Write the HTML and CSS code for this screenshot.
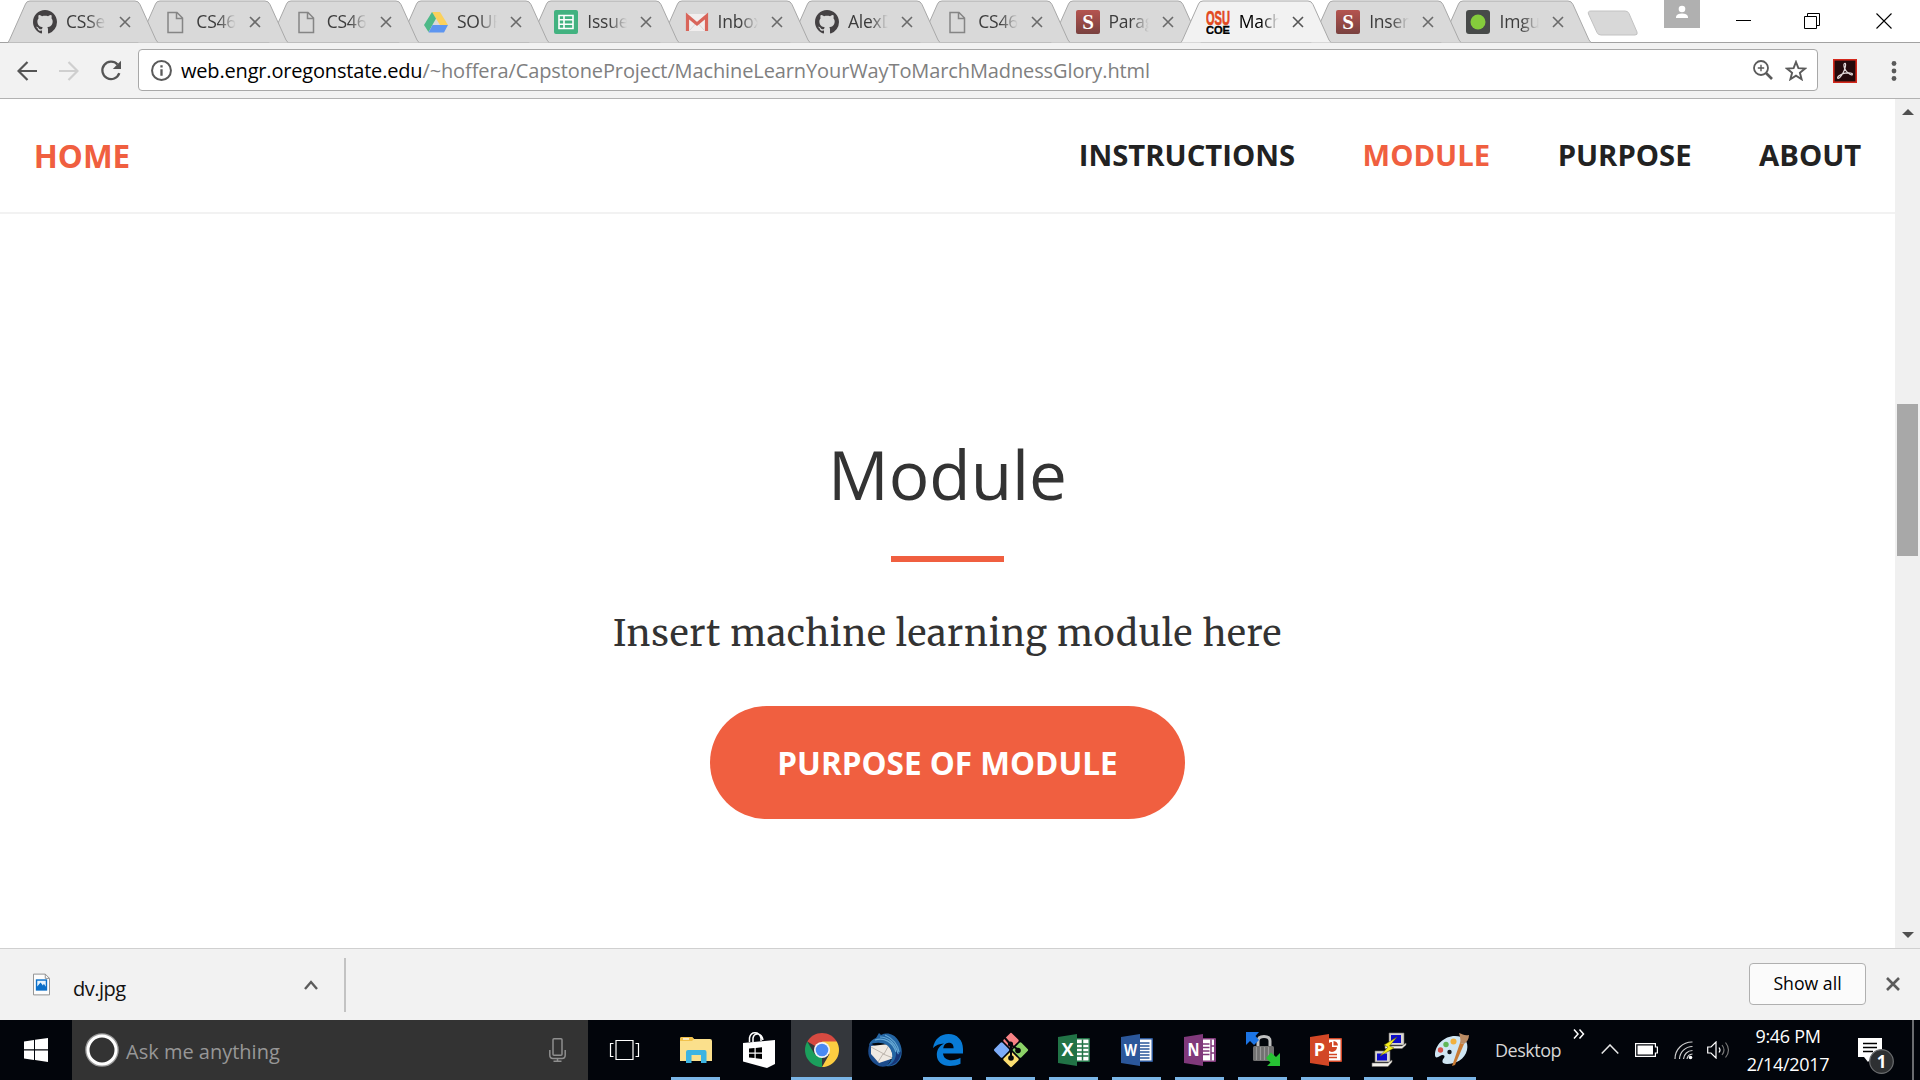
FILE: index.html
```html
<!DOCTYPE html>
<html lang="en">
<head>
<meta charset="utf-8">
<title>Machine Learn Your Way To March Madness Glory</title>
<link rel="stylesheet" href="styles.css">
</head>
<body>
<svg class="defs" width="0" height="0" aria-hidden="true">
  <symbol id="tab" viewBox="0 0 150 43" preserveAspectRatio="none">
    <path d="M0 42.500L1.500 40L17.500 4Q18.500 1 22 1H127Q130.500 1 132 4.500L148 40L150 42.500" stroke-width="1"/>
  </symbol>
  <symbol id="github" viewBox="0 0 16 16"><path fill="#444143" d="M8 0C3.580 0 0 3.580 0 8c0 3.540 2.290 6.530 5.470 7.590.4.070.55-.17.55-.38 0-.19-.01-.82-.01-1.490-2.010.37-2.530-.49-2.690-.94-.09-.23-.48-.94-.82-1.130-.28-.15-.68-.52-.01-.53.63-.01 1.080.58 1.230.82.72 1.210 1.870.87 2.330.66.07-.52.28-.87.51-1.070-1.780-.2-3.640-.89-3.640-3.950 0-.87.31-1.590.82-2.150-.08-.2-.36-1.020.08-2.120 0 0 .67-.21 2.200.82.64-.18 1.320-.27 2-.27s1.360.09 2 .27c1.530-1.040 2.200-.82 2.200-.82.44 1.100.16 1.920.08 2.120.51.56.82 1.270.82 2.150 0 3.070-1.870 3.750-3.650 3.950.29.25.54.73.54 1.480 0 1.070-.01 1.930-.01 2.200 0 .21.15.46.55.38A8.010 8.010 0 0 0 16 8c0-4.420-3.580-8-8-8z"/></symbol>
  <symbol id="page" viewBox="0 0 24 24"><path d="M5 2.500H14L19.500 8V22.500H5ZM13.500 2.500V8.500H19.500" fill="none" stroke="#858585" stroke-width="1.500"/></symbol>
  <symbol id="s" viewBox="0 0 24 24"><defs><linearGradient id="sg" x2="0" y2="1"><stop stop-color="#b5544f"/><stop offset="1" stop-color="#79413f"/></linearGradient></defs><rect width="24" height="24" rx="2" fill="url(#sg)"/><text x="12" y="19" text-anchor="middle" class="s-letter">S</text></symbol>
  <symbol id="x" viewBox="0 0 12 12"><path d="M1 1L11 11M11 1L1 11" fill="none" stroke="currentColor" stroke-width="1.600"/></symbol>
</svg>

<header class="tabstrip">
  <div class="tabs">
    <div class="tab"><svg class="shape"><use href="#tab"/></svg><svg class="fav"><use href="#github"/></svg><span>CSSe</span><svg class="close"><use href="#x"/></svg></div>
    <div class="tab"><svg class="shape"><use href="#tab"/></svg><svg class="fav"><use href="#page"/></svg><span>CS46</span><svg class="close"><use href="#x"/></svg></div>
    <div class="tab"><svg class="shape"><use href="#tab"/></svg><svg class="fav"><use href="#page"/></svg><span>CS46</span><svg class="close"><use href="#x"/></svg></div>
    <div class="tab"><svg class="shape"><use href="#tab"/></svg><svg class="fav" viewBox="0 0 24 24"><path d="M8 2H16L24 15H16Z" fill="#fbd15c"/><path d="M8 2L12 8.500L4.500 22L0 15Z" fill="#4db987"/><path d="M8.500 15H24L20 22.500H4.500Z" fill="#5d95f0"/></svg><span>SOURCE</span><svg class="close"><use href="#x"/></svg></div>
    <div class="tab"><svg class="shape"><use href="#tab"/></svg><svg class="fav" viewBox="0 0 24 24"><rect width="24" height="24" rx="2" fill="#42b280"/><path d="M5 5.500H19V18.500H5ZM5 9.800H19M5 14.200H19M10 5.500V18.500" fill="none" stroke="#fff" stroke-width="1.600"/></svg><span>Issues</span><svg class="close"><use href="#x"/></svg></div>
    <div class="tab"><svg class="shape"><use href="#tab"/></svg><svg class="fav" viewBox="0 0 24 24"><path d="M1 4H23V21H1Z" fill="#f1eeee"/><path d="M5 20L12 12L19 20" fill="none" stroke="#d8d6d6"/><path d="M2.500 21V6L12 14L21.500 6V21" fill="none" stroke="#d9655a" stroke-width="3.200"/></svg><span>Inbox</span><svg class="close"><use href="#x"/></svg></div>
    <div class="tab"><svg class="shape"><use href="#tab"/></svg><svg class="fav"><use href="#github"/></svg><span>AlexD</span><svg class="close"><use href="#x"/></svg></div>
    <div class="tab"><svg class="shape"><use href="#tab"/></svg><svg class="fav"><use href="#page"/></svg><span>CS46</span><svg class="close"><use href="#x"/></svg></div>
    <div class="tab"><svg class="shape"><use href="#tab"/></svg><svg class="fav"><use href="#s"/></svg><span>Parag</span><svg class="close"><use href="#x"/></svg></div>
    <div class="tab active"><svg class="shape"><use href="#tab"/></svg><svg class="fav" viewBox="0 0 24 24"><text x="0" y="14.500" textLength="24" lengthAdjust="spacingAndGlyphs" class="osu">OSU</text><text x="0" y="24" textLength="24" lengthAdjust="spacingAndGlyphs" class="coe">COE</text></svg><span>Mach</span><svg class="close"><use href="#x"/></svg></div>
    <div class="tab"><svg class="shape"><use href="#tab"/></svg><svg class="fav"><use href="#s"/></svg><span>Insert</span><svg class="close"><use href="#x"/></svg></div>
    <div class="tab"><svg class="shape"><use href="#tab"/></svg><svg class="fav" viewBox="0 0 24 24"><rect width="24" height="24" rx="3" fill="#474a49"/><circle cx="12" cy="12" r="7.500" fill="#85cc3c"/></svg><span>Imgur</span><svg class="close"><use href="#x"/></svg></div>
  </div>
  <svg class="newtab" viewBox="0 0 52 26"><path d="M4 1H38Q41 1 42 3.500L50 22Q51 25 48 25H14Q11 25 10 22.500L1.500 4Q0.500 1 4 1Z" fill="#d8d8d8" stroke="#c2c2c2"/></svg>
  <div class="winctl">
    <svg class="avatar" viewBox="0 0 36 28"><path fill="#b0b0b0" d="M0 0H36V28H0Z"/><circle cx="18" cy="9" r="3.300" fill="#fff"/><path d="M12 18V16.500Q13 13.500 18 13.500T24 16.500V18Z" fill="#fff"/></svg>
    <svg class="min" viewBox="0 0 15 16"><path d="M0 8.500H15" stroke="#000"/></svg>
    <svg class="max" viewBox="0 0 16 16"><path d="M.5 3.500H12.500V15.500H.5ZM3.500 3.500V.5H15.500V12.500H12.500" fill="none" stroke="#000"/></svg>
    <svg class="quit" viewBox="0 0 16 16"><path d="M.5 .5L15.500 15.500M15.500 .5L.5 15.500" stroke="#000" stroke-width="1.100"/></svg>
  </div>
</header>

<div class="toolbar">
  <svg class="back" viewBox="0 0 20 20"><path d="M20 10H2M10.500 1L1.500 10L10.500 19" fill="none" stroke="#555" stroke-width="2.200"/></svg>
  <svg class="fwd" viewBox="0 0 20 20"><path d="M0 10H18M9.500 1L18.500 10L9.500 19" fill="none" stroke="#cfcfcf" stroke-width="2.200"/></svg>
  <svg class="reload" viewBox="0 0 22 22"><path d="M17.500 4.500A8.700 8.700 0 1 0 19.300 13.200" fill="none" stroke="#555" stroke-width="2.300"/><path d="M21 .8V9H12.800Z" fill="#555"/></svg>
  <div class="omnibox">
    <svg class="info" viewBox="0 0 20 20"><circle cx="10" cy="10" r="9" fill="none" stroke="#5a5a5a" stroke-width="1.900"/><path d="M10 8.800V15M10 5V7.200" stroke="#5a5a5a" stroke-width="2.200"/></svg>
    <div class="url"><b>web.engr.oregonstate.edu</b>/~hoffera/CapstoneProject/MachineLearnYourWayToMarchMadnessGlory.html</div>
    <svg class="lens" viewBox="0 0 20 20"><circle cx="8" cy="8" r="7" fill="none" stroke="#5a5a5a" stroke-width="1.800"/><path d="M8 4.800V11.200M4.800 8H11.200" stroke="#5a5a5a" stroke-width="1.400"/><path d="M13 13L19 19" stroke="#5a5a5a" stroke-width="2.600"/></svg>
    <svg class="star" viewBox="0 0 22 21"><path d="M11 2L13.400 8.200L20 8.600L14.900 12.800L16.600 19.200L11 15.600L5.400 19.200L7.100 12.800L2 8.600L8.600 8.200Z" fill="none" stroke="#5a5a5a" stroke-width="1.900"/></svg>
  </div>
  <svg class="adobe" viewBox="0 0 24 24"><rect x=".8" y=".8" width="22.400" height="22.400" fill="#240a0c" stroke="#d4281c" stroke-width="1.600"/><path d="M11.500 4.500C13.500 3.500 12.500 9 10.500 13C8.500 17 6 20 4.800 19.300C3.500 18 8 15 12 14.200C16 13.400 20 14 19.300 15.600C18.500 17 13 13 11.600 9.500C10.800 7 10.500 5 11.500 4.500Z" fill="none" stroke="#e5dcdc" stroke-width="1.200"/></svg>
  <svg class="dots" viewBox="0 0 6 20"><g fill="#5a5a5a"><circle cx="3" cy="2.500" r="2.400"/><circle cx="3" cy="10" r="2.400"/><circle cx="3" cy="17.500" r="2.400"/></g></svg>
</div>

<div class="viewport">
  <main class="page">
    <nav class="nav">
      <a class="brand">HOME</a>
      <div class="links"><a>INSTRUCTIONS</a><a class="on">MODULE</a><a>PURPOSE</a><a>ABOUT</a></div>
    </nav>
    <section class="hero">
      <h2>Module</h2>
      <hr>
      <p>Insert machine learning module here</p>
      <a class="btn">PURPOSE OF MODULE</a>
    </section>
  </main>
  <div class="scrollbar">
    <svg viewBox="0 0 12 6"><path d="M0 6L6 0L12 6Z" fill="#505050"/></svg>
    <div class="thumb"></div>
    <svg viewBox="0 0 12 6"><path d="M0 0L6 6L12 0Z" fill="#505050"/></svg>
  </div>
</div>

<div class="shelf">
  <div class="item">
    <svg class="file" viewBox="0 0 18 23"><path d="M.5 .5H13L17.500 5V22.500H.5Z" fill="#fdfdfd" stroke="#8d8d8d"/><path d="M13 .5V5H17.500" fill="none" stroke="#8d8d8d"/><path d="M3 6H15V18H3Z" fill="#0a6fc9"/><path d="M4.500 7.500H13.500V14L11.500 10.800L10.500 12.500L8 9.500L4.500 13.500Z" fill="#e8f4fd"/></svg>
    <span>dv.jpg</span>
    <svg class="up" viewBox="0 0 14 10"><path d="M1 9L7 2L13 9" fill="none" stroke="#5c5c5c" stroke-width="2.400"/></svg>
  </div>
  <div class="showall">Show all</div>
  <svg class="dismiss" viewBox="0 0 14 14"><path d="M1 1L13 13M13 1L1 13" stroke="#5c5c5c" stroke-width="2.600"/></svg>
</div>

<footer class="taskbar">
  <div class="start"><svg viewBox="0 0 24 24"><path d="M0 3.400L10 2V11.300H0ZM11 1.800L24 0V11.300H11ZM0 12.500H10V21.900L0 20.600ZM11 12.500H24V24L11 22Z" fill="#fff"/></svg></div>
  <div class="search">
    <svg class="ring" viewBox="0 0 34 34"><circle cx="17" cy="17" r="15.800" fill="none" stroke="#9a9a9a" stroke-width="2"/><circle cx="17" cy="17" r="14" fill="none" stroke="#fff" stroke-width="3"/></svg>
    <span>Ask me anything</span>
    <svg class="mic" viewBox="0 0 17 24"><g fill="none" stroke="#8f8f8f" stroke-width="1.500"><rect x="4" y=".8" width="9" height="16.400" rx="1"/><path d="M.8 12V17Q.8 20.500 4 20.500H13Q16.200 20.500 16.200 17V12M8.500 20.500V23M4.500 23.200H12.500"/></g></svg>
  </div>
  <div class="apps">
    <div class="app plain"><svg viewBox="0 0 36 36"><path d="M9 8.500H26V27.500H9ZM6.500 11.500H3.500V24.500H6.500M28.500 11.500H31.500V24.500H28.500" fill="none" stroke="#fff" stroke-width="1.200"/></svg></div>
    <div class="app"><svg viewBox="0 0 36 36"><path d="M2 7Q2 5 4 5H14L16 7H32Q34 7 34 9V29H2Z" fill="#fbe08c"/><path d="M2 7Q2 5 4 5H14L16 7L14 9H2Z" fill="#f1c14b"/><path d="M5 6.300H11V7.600H5Z" fill="#fff"/><path d="M8 31V20Q8 18 10 18H26.500Q28.500 18 28.500 20V31H23V23H13.500V31Z" fill="#3db4e2"/></svg></div>
    <div class="app plain"><svg viewBox="0 0 36 36"><path d="M2 11L34 8V32L26 36L2 29.500Z" fill="#fff"/><path d="M8.500 10V6Q9.500 .8 14 .8T20 6V9M12 10V6Q13 1.500 17 2T22 8" fill="none" stroke="#fff" stroke-width="1.500"/><path d="M8 16.500L13.500 16V20.500H8ZM14.700 15.900L21 15.200V20.500H14.700ZM8 21.700H13.500V26L8 25.500ZM14.700 21.700H21V27L14.700 26.200Z" fill="#000"/></svg></div>
    <div class="app active"><svg viewBox="0 0 36 36"><path d="M18 18L3.280 9.500A17 17 0 0 1 32.720 9.500Z" fill="#d64a41"/><path d="M18 18L18 35A17 17 0 0 1 3.280 9.500L10.640 22.250Z" fill="#1b9f5c"/><path d="M18 9.500H32.720A17 17 0 0 1 18 35L25.360 22.250Z" fill="#fccd41"/><circle cx="18" cy="18" r="8" fill="#f4f4f4"/><circle cx="18" cy="18" r="6.300" fill="#4a8af4"/></svg></div>
    <div class="app plain"><svg viewBox="0 0 36 36"><path d="M3 11C1 16 0 23 4 28C8 33 13 36 20 34L24 28L8 14Z" fill="#1c4c8c"/><path d="M4 14L22 12L27 26L12 31L4 22Z" fill="#efe9e2"/><path d="M4 15L17 22L22 13M11 30L16 22L26 26" fill="none" stroke="#bdb5ad"/><path d="M2 13C3 9 6 7 9 6L12 1L14 3C20 0 27 2 31 8C36 15 36 25 31 30C28 34 23 35 19 34C27 29 27 20 21 14C16 10 8 10 2 13Z" fill="#2465a3"/><path d="M8 8C17 5 26 10 29 20M13 5C22 5 29 12 31 22M18 3C26 6 31 13 32 20" fill="none" stroke="#67a9d5" stroke-width="1.200"/><path d="M29 18C30 25 27 31 21 34C29 33 34 27 34 19L31 23Z" fill="#173678"/></svg></div>
    <div class="app"><svg viewBox="0 0 36 36"><path d="M3 16C4.500 7 10.500 2 18.500 2C27 2 33 8 33 17V21.500H13C13.500 26 17 28.300 21.500 28.300C25 28.300 28 27.300 30.500 25.800V31.800C27.500 33.400 23.500 34 20 34C12 34 6.800 29.500 6.800 22.700C6.800 17.500 9.500 13.500 14 11.400C9.500 11.700 5.500 13 3 16ZM13.200 16.200H23.600C23.600 12.500 21.800 10.800 18.600 10.800C15.500 10.800 13.800 13 13.200 16.200Z" fill="#087bd6"/></svg></div>
    <div class="app"><svg viewBox="0 0 36 36"><g transform="rotate(45 18 18)"><rect x="5.500" y="5.500" width="11.700" height="11.700" rx="1.500" fill="#f78285"/><rect x="18.800" y="5.500" width="11.700" height="11.700" rx="1.500" fill="#8cd268"/><rect x="5.500" y="18.800" width="11.700" height="11.700" rx="1.500" fill="#7dacf8"/><rect x="18.800" y="18.800" width="11.700" height="11.700" rx="1.500" fill="#fbde71"/></g><path d="M11 5L18 13V26M18 13L26 18" stroke="#05070c" stroke-width="2" fill="none"/><g fill="#05070c"><circle cx="17.500" cy="12" r="2.600"/><circle cx="18" cy="26" r="2.800"/><circle cx="25" cy="18.500" r="2.800"/></g></svg></div>
    <div class="app"><svg viewBox="0 0 36 36"><rect x="20" y="6" width="14" height="24" rx="1" fill="#217346"/><path d="M20 7.500H32.500V28.500H20Z" fill="#fff"/><path d="M20 12H32.500M20 16H32.500M20 20H32.500M20 24H32.500M26.500 7.500V28.500" stroke="#217346" stroke-width="1.500"/><path d="M2 5L21 2V34L2 31Z" fill="#217346"/><text x="11.500" y="24" text-anchor="middle" class="office">X</text></svg></div>
    <div class="app"><svg viewBox="0 0 36 36"><rect x="20" y="6" width="14" height="24" rx="1" fill="#2b579a"/><path d="M20 7.500H32.500V28.500H20Z" fill="#fff"/><path d="M20 11H30.500M20 14H30.500M20 17H30.500M20 20H30.500M20 23H30.500M20 26H30.500" stroke="#2b579a" stroke-width="1.300"/><path d="M2 5L21 2V34L2 31Z" fill="#2b579a"/><text x="11.500" y="23.500" textLength="13" lengthAdjust="spacingAndGlyphs" text-anchor="middle" class="office w">W</text></svg></div>
    <div class="app"><svg viewBox="0 0 36 36"><rect x="20" y="6" width="14" height="24" rx="1" fill="#80397b"/><path d="M20 7.500H32V28.500H20Z" fill="#fff"/><path d="M20 12H27.500M20 15.500H27.500M20 19H27.500M20 22.500H27.500M29 7.500V28.500M28.500 14H33M28.500 21H33" stroke="#80397b" stroke-width="1.500"/><path d="M2 5L21 2V34L2 31Z" fill="#80397b"/><text x="11.500" y="24" textLength="12" lengthAdjust="spacingAndGlyphs" text-anchor="middle" class="office">N</text></svg></div>
    <div class="app"><svg viewBox="0 0 36 36"><path d="M13 14V9Q13 4.500 19 4.500T25 9V14" fill="none" stroke="#bfc0c0" stroke-width="3"/><rect x="8" y="14" width="21" height="15" rx="1.500" fill="#717171"/><path d="M11.500 15V28M15.500 15V28M19.500 15V28M23.500 15V28" stroke="#999" stroke-width="1.200"/><path d="M1 0H14L10.500 4L14 8L9 13L5 9L1 13Z" fill="#1c75e5"/><path d="M35 34H22L25.500 30.500L21 26L26 20.500L31 25L35 21Z" fill="#27c334"/></svg></div>
    <div class="app"><svg viewBox="0 0 36 36"><rect x="20" y="6" width="14" height="24" rx="1" fill="#d24726"/><path d="M20 7.500H32.500V28.500H20Z" fill="#fff"/><path d="M20 22.500H29M20 25.500H29" stroke="#d24726" stroke-width="1.400"/><path d="M24 10A5 5 0 1 0 29 15H24Z" fill="#d24726"/><path d="M25.500 9A5 5 0 0 1 30 13.500H25.500Z" fill="#d24726"/><path d="M2 5L21 2V34L2 31Z" fill="#d24726"/><text x="11.500" y="24" text-anchor="middle" class="office">P</text></svg></div>
    <div class="app"><svg viewBox="0 0 36 36"><g stroke="#77746f" stroke-width=".6"><path d="M18 1H33V13H18Z" fill="#d9d6cf"/><path d="M14 14H31L35 11V13L31 16.500H14Z" fill="#f3f1eb"/><path d="M4 19H19V30H4Z" fill="#d9d6cf"/><path d="M1 31H17L21 28V30L17 34.500H1Z" fill="#f3f1eb"/></g><path d="M20 3H30V11H20ZM6 21.500H16V28.500H6Z" fill="#0d0cc9"/><path d="M26 5L13 13L17 15L9 24L23 16L18.500 14Z" fill="#f5ee1e" stroke="#5c5800" stroke-width=".5"/></svg></div>
    <div class="app"><svg viewBox="0 0 36 36"><path d="M1 23C1 13 10 4 21 4C30 4 35 10 33 18C31 27 22 32 13 32C7 32 8 28 10 26C12 23 8 22 6 24C3 26 1 26 1 23Z" fill="#cfe6f3"/><circle cx="6.500" cy="18" r="2.700" fill="#d8534b"/><circle cx="12" cy="12.500" r="2.700" fill="#5fb657"/><circle cx="19.500" cy="9.500" r="3" fill="#f2b13c"/><circle cx="15.500" cy="20" r="2.200" fill="#10151c"/><path d="M26 11L30 12L21 33L18 34Z" fill="#c77a33"/><path d="M25 1C29 2 30 4 35 3C35 7 33 10 30 12L26 11C27 8 26 5 25 1Z" fill="#bb8c64"/></svg></div>
  </div>
  <div class="tray">
    <span class="desk">Desktop</span>
    <svg class="more" viewBox="0 0 12 10"><path d="M1 .5L5 5L1 9.500M6.500 .5L10.500 5L6.500 9.500" fill="none" stroke="#fff" stroke-width="1.500"/></svg>
    <svg class="caret" viewBox="0 0 18 10"><path d="M.7 9.500L9 1L17.300 9.500" fill="none" stroke="#e8e8e8" stroke-width="1.500"/></svg>
    <svg class="batt" viewBox="0 0 23 14"><path d="M.6 .6H20.400V4H22.400V10H20.400V13.400H.6Z" fill="none" stroke="#fff" stroke-width="1.200"/><path d="M2.500 2.500H18V11.500H2.500Z" fill="#fff"/></svg>
    <svg class="wifi" viewBox="0 0 19 19"><g fill="none" stroke="#d0d0d0" stroke-width="1.200"><path d="M1 18A17 17 0 0 1 18.500 1M5.500 18A13 13 0 0 1 18.500 5.500M9.500 18A9 9 0 0 1 18.500 9.500M13 18A6 6 0 0 1 18.500 13"/></g><circle cx="16.500" cy="16.500" r="1.800" fill="#fff"/></svg>
    <svg class="vol" viewBox="0 0 23 18"><path d="M.7 6H4L9 1V17L4 12H.7Z" fill="none" stroke="#fff" stroke-width="1.200"/><path d="M12 6.500Q14 9 12 11.500" fill="none" stroke="#fff" stroke-width="1.200"/><path d="M15 4Q19 9 15 14M18.500 1.500Q24.500 9 18.500 16.500" fill="none" stroke="#777" stroke-width="1.200"/></svg>
    <div class="clock"><span>9:46 PM</span><span>2/14/2017</span></div>
    <svg class="note" viewBox="0 0 36 37"><path d="M0 1H24V20H14L10 25L6 20H0Z" fill="#fff"/><path d="M5 6.500H19M5 10.500H19M5 14.500H15" stroke="#000" stroke-width="1.300"/><circle cx="23.500" cy="24.500" r="11.800" fill="#2e3032" stroke="#6c6e70" stroke-width="1.200"/><text x="23.500" y="31" text-anchor="middle" class="badge">1</text></svg>
    <div class="peek"></div>
  </div>
</footer>
</body>
</html>
```
FILE: styles.css
```css
* { box-sizing: border-box; }
body { margin: 0; width: 1920px; height: 1080px; overflow: hidden; background: #fff; font-family: "Open Sans", "Noto Sans", sans-serif; display: flex; flex-direction: column; }
svg { display: block; flex: none; }
.defs { position: absolute; }

/* tab strip */
.tabstrip { height: 43px; flex: none; display: flex; align-items: flex-start; border-bottom: 1px solid #a2a2a2; padding-left: 8px; }
.tabs { display: flex; height: 43px; isolation: isolate; }
.tab { position: relative; width: 150px; height: 43px; margin-right: -19.700px; flex: none; display: flex; align-items: center; padding-left: 25px; z-index: 1; color: #6a6a6a; }
.tab:nth-child(1) { z-index: 12; }
.tab:nth-child(2) { z-index: 11; }
.tab:nth-child(3) { z-index: 10; }
.tab:nth-child(4) { z-index: 9; }
.tab:nth-child(5) { z-index: 8; }
.tab:nth-child(6) { z-index: 7; }
.tab:nth-child(7) { z-index: 6; }
.tab:nth-child(8) { z-index: 5; }
.tab:nth-child(9) { z-index: 4; }
.tab:nth-child(11) { z-index: 3; }
.tab:nth-child(12) { z-index: 2; }
.tab.active { z-index: 20; color: #555; }
.shape { position: absolute; left: 0; top: 0; width: 150px; height: 43px; fill: #d9d9d9; stroke: #a9a9a9; z-index: -1; }
.active .shape { fill: #f2f2f2; }
.fav { width: 24px; height: 24px; margin-top: 1px; }
.tab span { width: 40px; margin-left: 9px; overflow: hidden; white-space: nowrap; font-size: 17.500px; line-height: 30px; margin-top: -2px; color: #3c3c3c; letter-spacing: -.2px; -webkit-mask-image: linear-gradient(90deg, #000 55%, transparent); mask-image: linear-gradient(90deg, #000 55%, transparent); }
.tab.active span { color: #000; }
.close { width: 12px; height: 12px; margin: 1px 0 0 13px; }
.s-letter { font: 700 21px "Liberation Serif", serif; fill: #fff; }
.osu { font: 700 20px "Liberation Sans", sans-serif; fill: #e2491d; stroke: #e2491d; stroke-width: .7px; }
.coe { font: 700 11px "Liberation Sans", sans-serif; fill: #000; stroke: #000; stroke-width: .3px; }
.newtab { width: 52px; height: 26px; margin: 10px 0 0 15px; }
.winctl { display: flex; margin-left: auto; padding-right: 28px; }
.avatar { width: 36px; height: 28px; }
.min { width: 15px; height: 16px; margin: 12px 0 0 36px; }
.max { width: 16px; height: 16px; margin: 13px 0 0 53px; }
.quit { width: 16px; height: 16px; margin: 13px 0 0 56px; }

/* toolbar */
.toolbar { height: 56px; flex: none; background: #f2f2f2; border-bottom: 1px solid #b2b2b2; display: flex; align-items: center; padding: 0 23px 0 17px; }
.back { width: 20px; height: 20px; }
.fwd { width: 20px; height: 20px; margin-left: 22px; }
.reload { width: 22px; height: 22px; margin-left: 21px; }
.omnibox { width: 1680px; height: 42px; margin-left: 16px; margin-top: -1px; background: #fff; border: 1px solid #a8a8a8; border-radius: 4px; display: flex; align-items: center; padding: 0 10px 0 12px; }
.info { width: 21px; height: 21px; }
.url { margin: 2px auto 0 9px; font-size: 20px; line-height: 30px; color: #808080; letter-spacing: -.110px; white-space: nowrap; }
.url b { font-weight: 400; color: #000; letter-spacing: -.180px; }
.lens { width: 20px; height: 20px; }
.star { width: 22px; height: 21px; margin-left: 12px; }
.adobe { width: 24px; height: 24px; margin-left: 15px; }
.dots { width: 6px; height: 20px; margin-left: auto; }

/* page */
.viewport { height: 849px; flex: none; display: flex; }
.page { width: 1895px; }
.nav { height: 115px; border-bottom: 2px solid #f2f2f2; display: flex; justify-content: space-between; padding: 38px 33.750px 0; font-weight: 700; line-height: 38px; color: #222; }
.brand { font-size: 31.500px; color: #f05f40; }
.links { display: flex; gap: 67.500px; font-size: 29.250px; margin-top: -1px; }
.on { color: #f05f40; }
.hero { padding-top: 222px; display: flex; flex-direction: column; align-items: center; color: #333; }
.hero h2 { margin: 0; font-weight: 400; font-size: 67.500px; line-height: 76px; }
.hero hr { width: 113px; height: 6px; margin: 44px 0 47px; border: 0; background: #f05f40; }
.hero p { margin: 0; font: 400 36px/50px Merriweather, "Noto Serif", serif; letter-spacing: .750px; white-space: nowrap; }
.btn { margin-top: 47px; width: 475px; height: 113px; border-radius: 57px; background: #f05f40; color: #fff; font-weight: 700; font-size: 31.500px; line-height: 113px; text-align: center; }
.scrollbar { width: 25px; background: #f0f0f0; display: flex; flex-direction: column; align-items: center; padding: 10px 0; }
.scrollbar svg { width: 12px; height: 6px; }
.thumb { width: 21px; height: 152px; margin: 289px 0 auto; background: #a8a8a8; }

/* download shelf */
.shelf { height: 72px; flex: none; background: #f2f2f2; border-top: 1px solid #d0d0d0; display: flex; align-items: center; padding-right: 20px; }
.item { width: 346px; height: 54px; border-right: 2px solid #c3c3c3; display: flex; align-items: center; padding: 0 26px 0 33px; }
.file { width: 17px; height: 23px; }
.item span { margin: 9px auto 0 23px; font-size: 20px; line-height: 28px; letter-spacing: -.500px; color: #111; }
.up { width: 14px; height: 10px; }
.showall { margin: -2px 0 0 auto; width: 117px; height: 42px; border: 1px solid #b0b0b0; border-radius: 4px; background: #fbfbfb; text-align: center; font-size: 17.700px; line-height: 38px; color: #000; }
.dismiss { width: 14px; height: 14px; margin: -2px 0 0 20px; }

/* taskbar */
.taskbar { height: 60px; flex: none; background: #02050b; display: flex; color: #fff; }
.start { width: 72px; display: flex; align-items: center; justify-content: center; }
.start svg { width: 24px; height: 24px; }
.search { width: 516px; background: #333; display: flex; align-items: center; padding: 0 22px 0 13px; }
.ring { width: 34px; height: 34px; }
.search span { margin: 4px auto 0 7px; font-size: 20px; line-height: 28px; color: #979797; }
.mic { width: 17px; height: 24px; }
.apps { display: flex; padding-left: 6px; gap: 14px; }
.app { width: 49px; height: 60px; display: flex; justify-content: center; padding-top: 12px; border-bottom: 3px solid #7ab5e6; }
.app svg { width: 36px; height: 36px; }
.app.plain { border-color: transparent; }
.app.active { width: 61px; margin: 0 -6px; background: #34373c; }
.app.plain:first-child { width: 63px; padding-right: 2px; }
.office { font: 700 18px "Open Sans", sans-serif; fill: #fff; }
.office.w { font-size: 16px; }
.tray { display: flex; align-items: flex-start; margin-left: auto; }
.desk { margin-top: 16px; font-size: 18px; line-height: 28px; letter-spacing: -.500px; color: #d6d6d6; }
.more { width: 12px; height: 10px; margin: 9px 0 0 12px; }
.caret { width: 18px; height: 10px; margin: 24px 0 0 16px; }
.batt { width: 23px; height: 14px; margin: 23px 0 0 16px; }
.wifi { width: 19px; height: 19px; margin: 21px 0 0 16px; }
.vol { width: 23px; height: 18px; margin: 21px 0 0 14px; }
.clock { width: 84px; margin: 2px 0 0 16px; display: flex; flex-direction: column; align-items: center; font-size: 18px; line-height: 28px; letter-spacing: -.300px; }
.note { width: 36px; height: 37px; margin: 17px 0 0 28px; }
.badge { font: 700 17px "Open Sans", sans-serif; fill: #fff; }
.peek { width: 8px; height: 60px; margin-left: 18px; border-left: 2px solid #6a6c70; }
```
